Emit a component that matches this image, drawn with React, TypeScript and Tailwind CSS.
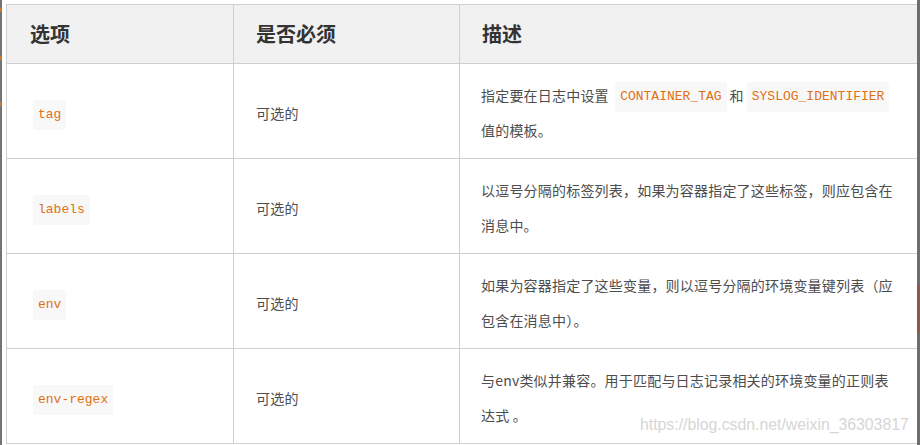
import React from "react";

const cjk = { fontFamily: '"Noto Sans CJK SC", "Noto Sans", sans-serif' };

function Code({ children, first }: { children: React.ReactNode; first?: boolean }) {
  return (
    <code
      className={`inline-block align-middle bg-[#f9f8f8] text-[#df7014] text-[13px] leading-[22px] py-[4px] px-[5px] rounded-[3px] tracking-normal ${first ? "ml-[5px]" : "mx-[3px]"}`}
      style={{ fontFamily: '"Liberation Mono", "DejaVu Sans Mono", monospace' }}
    >
      {children}
    </code>
  );
}

const rows: { key: string; desc: React.ReactNode }[] = [
  {
    key: "tag",
    desc: (
      <>
        <span className="whitespace-nowrap">
          指定要在日志中设置 <Code>CONTAINER_TAG</Code>和<Code>SYSLOG_IDENTIFIER</Code>
        </span>
        <br />
        值的模板。
      </>
    ),
  },
  {
    key: "labels",
    desc: (
      <>
        <span className="whitespace-nowrap">以逗号分隔的标签列表，如果为容器指定了这些标签，则应包含在</span>
        <br />
        消息中。
      </>
    ),
  },
  {
    key: "env",
    desc: (
      <>
        <span className="whitespace-nowrap">如果为容器指定了这些变量，则以逗号分隔的环境变量键列表（应</span>
        <br />
        包含在消息中）。
      </>
    ),
  },
  {
    key: "env-regex",
    desc: (
      <>
        <span className="whitespace-nowrap">与env类似并兼容。用于匹配与日志记录相关的环境变量的正则表</span>
        <br />
        达式 。
      </>
    ),
  },
];

export default function App() {
  return (
    <div className="relative w-[920px] h-[445px] bg-white overflow-hidden flex" style={cjk}>
      <div className="w-[2px] h-full bg-[#747474] flex flex-col">
        <div className="h-[8px]" />
        <div className="h-[4px] bg-[#c8772e]" />
        <div className="h-[44px]" />
        <div className="h-[4px] bg-[#c8772e]" />
        <div className="h-[42px]" />
        <div className="h-[4px] bg-[#c8772e]" />
      </div>
      <div className="flex-1 pl-[4px] pt-[4px] overflow-hidden">
        <table className="border-collapse table-fixed w-[915px]">
          <colgroup>
            <col className="w-[227px]" />
            <col className="w-[226px]" />
            <col />
          </colgroup>
          <thead>
            <tr className="bg-[#f1f1f1] h-[59px]">
              <th className="border border-[#cfcfcf] text-left pl-[23px] text-[20px] font-bold text-[#333333] align-middle">选项</th>
              <th className="border border-[#cfcfcf] text-left pl-[22px] text-[20px] font-bold text-[#333333] align-middle">是否必须</th>
              <th className="border border-[#cfcfcf] text-left pl-[22px] text-[20px] font-bold text-[#333333] align-middle">描述</th>
            </tr>
          </thead>
          <tbody>
            {rows.map((r) => (
              <tr key={r.key} className="h-[95px]">
                <td className="border border-[#cfcfcf] pl-[21px] pt-[14px] pb-[10px] align-middle text-[14px] leading-[35px]">
                  <Code first>{r.key}</Code>
                </td>
                <td className="border border-[#cfcfcf] pl-[22px] pt-[14px] pb-[10px] align-middle text-[14px] leading-[35px] text-[#4d4d4d] tracking-[0.2px]">
                  可选的
                </td>
                <td className="border border-[#cfcfcf] pl-[21px] pr-[10px] pt-[14px] pb-[10px] align-middle text-[14px] leading-[35px] text-[#4d4d4d] tracking-[0.2px]">
                  {r.desc}
                </td>
              </tr>
            ))}
          </tbody>
        </table>
      </div>
      <div className="w-[3px] h-full bg-[#6e6e6e] flex flex-col">
        <div className="h-[285px]" />
        <div className="h-[48px] bg-[#8a5a4c]" />
      </div>
      <div
        className="absolute left-[640px] top-[414px] text-[15.8px] leading-[21px] text-[#d6d6d6] whitespace-nowrap"
        style={{ fontFamily: '"Liberation Sans", Arial, sans-serif' }}
      >
        https://blog.csdn.net/weixin_36303817
      </div>
    </div>
  );
}
